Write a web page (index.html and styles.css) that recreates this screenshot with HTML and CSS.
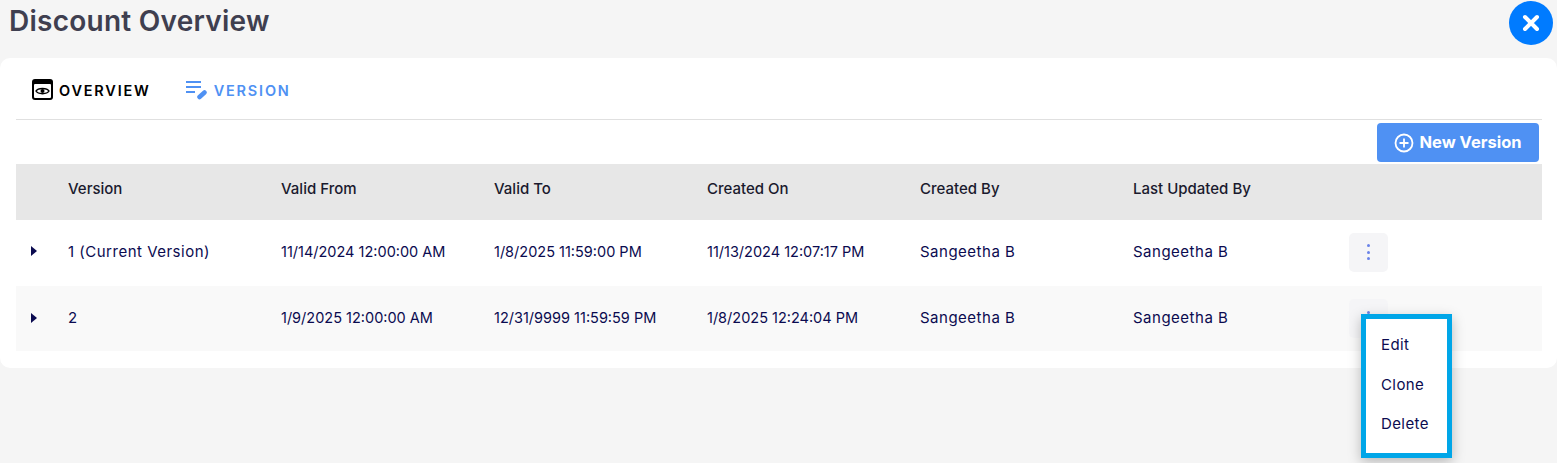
FILE: index.html
```html
<!DOCTYPE html>
<html lang="en">
<head>
  <meta charset="UTF-8" />
  <title>Discount Overview</title>
  <link rel="stylesheet" href="styles.css">
</head>
<body>
  <header class="page-head">
    <h1>Discount Overview</h1>
    <button class="close-btn" aria-label="Close">
      <svg width="18" height="18" viewBox="0 0 18 18"><path d="M3 3L15 15M15 3L3 15" stroke="#fff" stroke-width="4" stroke-linecap="round"/></svg>
    </button>
  </header>

  <div class="card">
    <div class="tabs">
      <div class="tab active">
        <svg width="22" height="22" viewBox="0 0 22 22">
          <rect x="0" y="0" width="21" height="21" rx="3" fill="#000"/>
          <rect x="2" y="5" width="17" height="14" rx="1" fill="#fff"/>
          <path d="M4 12C6 8.500 15 8.500 17 12C15 15.500 6 15.500 4 12Z" fill="none" stroke="#000" stroke-width="1.500"/>
          <circle cx="10.500" cy="12" r="2" fill="#000"/>
        </svg>
        <span>OVERVIEW</span>
      </div>
      <div class="tab">
        <svg width="23" height="20" viewBox="0 0 23 20">
          <path d="M0 2H15M0 7H15M0 12H9" stroke="#4f91f3" stroke-width="2.200"/>
          <path d="M13.500 17L18.500 12.500" stroke="#4f91f3" stroke-width="4.500" stroke-linecap="round"/>
        </svg>
        <span>VERSION</span>
      </div>
    </div>

    <div class="toolbar">
      <button class="new-btn">
        <svg width="20" height="20" viewBox="0 0 20 20"><circle cx="10" cy="10" r="8.500" fill="none" stroke="#fff" stroke-width="1.800"/><path d="M10 5.500V14.500M5.500 10H14.500" stroke="#fff" stroke-width="1.800"/></svg>
        <span class="new-label">New Version</span>
      </button>
    </div>

    <table class="versions">
      <thead>
        <tr>
          <th class="col-arrow"></th>
          <th>Version</th>
          <th>Valid From</th>
          <th>Valid To</th>
          <th>Created On</th>
          <th>Created By</th>
          <th>Last Updated By</th>
          <th class="col-more"></th>
        </tr>
      </thead>
      <tbody>
        <tr>
          <td><span class="arrow"></span></td>
          <td class="name">1 (Current Version)</td>
          <td class="date">11/14/2024 12:00:00 AM</td>
          <td class="date">1/8/2025 11:59:00 PM</td>
          <td class="date">11/13/2024 12:07:17 PM</td>
          <td class="name">Sangeetha B</td>
          <td class="name">Sangeetha B</td>
          <td><span class="more"><i></i><i></i><i></i></span></td>
        </tr>
        <tr class="alt">
          <td><span class="arrow"></span></td>
          <td class="name">2</td>
          <td class="date">1/9/2025 12:00:00 AM</td>
          <td class="date">12/31/9999 11:59:59 PM</td>
          <td class="date">1/8/2025 12:24:04 PM</td>
          <td class="name">Sangeetha B</td>
          <td class="name">Sangeetha B</td>
          <td><span class="more"><i></i><i></i><i></i></span></td>
        </tr>
      </tbody>
    </table>
  </div>

  <ul class="row-menu">
    <li>Edit</li>
    <li>Clone</li>
    <li>Delete</li>
  </ul>
</body>
</html>
```

FILE: styles.css
```css
html, body {
  height: 463px;
  overflow: hidden;
}

body {
  margin: 0;
  background-color: #f5f5f5;
  font-family: Inter, 'Open Sans', sans-serif;
  color: #0b0b50;
  position: relative;
}

.page-head {
  height: 58px;
  display: flex;
  justify-content: space-between;
  align-items: flex-start;
  padding: 0 4px 0 9px;
  box-sizing: border-box;
}

h1 {
  margin: 3px 0 0;
  font-size: 28px;
  line-height: 36px;
  font-weight: 600;
  letter-spacing: 0.25px;
  color: #3f3f50;
}

.close-btn {
  width: 44px;
  height: 44px;
  margin: 1px 0 0;
  border: none;
  border-radius: 50%;
  background-color: #007bff;
  display: flex;
  align-items: center;
  justify-content: center;
  padding: 0;
}

.card {
  background-color: #fff;
  border-radius: 10px;
  height: 310px;
  padding: 0 15px 0 16px;
  box-sizing: border-box;
}

.tabs {
  display: flex;
  gap: 35px;
  height: 62px;
  align-items: center;
  padding: 3px 0 0 16px;
  box-sizing: border-box;
  border-bottom: 1px solid #e0e0e0;
}

.tab {
  display: flex;
  align-items: center;
  gap: 5px;
  font-size: 14.500px;
  font-weight: 600;
  letter-spacing: 1.800px;
  color: #4f91f3;
}

.tab.active {
  color: #000;
}

.toolbar {
  display: flex;
  justify-content: flex-end;
  padding: 3px 3px 2px 0;
}

.new-btn {
  width: 162px;
  height: 39px;
  border: none;
  border-radius: 4px;
  background-color: #4f91f3;
  color: #fff;
  font-family: inherit;
  font-size: 16.500px;
  font-weight: 700;
  display: flex;
  align-items: center;
  justify-content: center;
  gap: 5px;
  padding: 0;
}

.new-label {
  margin-bottom: 2px;
}

.versions {
  width: 100%;
  table-layout: fixed;
  border-collapse: collapse;
  font-size: 15px;
}

.versions th {
  width: 213px;
  height: 56px;
  background-color: #e7e7e7;
  padding: 0 0 8px;
  box-sizing: border-box;
  text-align: left;
  font-weight: 500;
  color: #1a1a2e;
}

.versions th.col-arrow {
  width: 52px;
}

.versions th.col-more {
  width: 196px;
}

.versions td {
  height: 65px;
  padding: 0 0 2px;
  box-sizing: border-box;
}

.versions tbody tr:first-child td {
  height: 66px;
  padding-bottom: 4px;
}

.name {
  letter-spacing: 0.5px;
}

.date {
  font-size: 14.500px;
}

.alt td {
  background-color: #f9f9f9;
}

.arrow {
  display: block;
  width: 0;
  height: 0;
  margin-left: 15px;
  border-left: 6px solid #0b0b50;
  border-top: 5px solid transparent;
  border-bottom: 5px solid transparent;
}

.more {
  width: 39px;
  height: 39px;
  margin: 2px 0 0 3px;
  border-radius: 5px;
  background-color: #f5f5f7;
  display: flex;
  flex-direction: column;
  align-items: center;
  justify-content: center;
  gap: 3.500px;
}

.more i {
  width: 3px;
  height: 3px;
  border-radius: 50%;
  background-color: #6a83e8;
}

/* open menu for the second row, lies over the table */
.row-menu {
  position: absolute;
  left: 1361px;
  top: 314px;
  width: 91px;
  height: 144px;
  box-sizing: border-box;
  margin: 0;
  padding: 6px 0 0 15px;
  list-style: none;
  background-color: #fff;
  border: 5px solid #00a6e8;
  box-shadow: 0 4px 12px rgba(0,0,0,0.25);
  font-size: 15px;
  letter-spacing: 0.4px;
  line-height: 39.500px;
}
```
